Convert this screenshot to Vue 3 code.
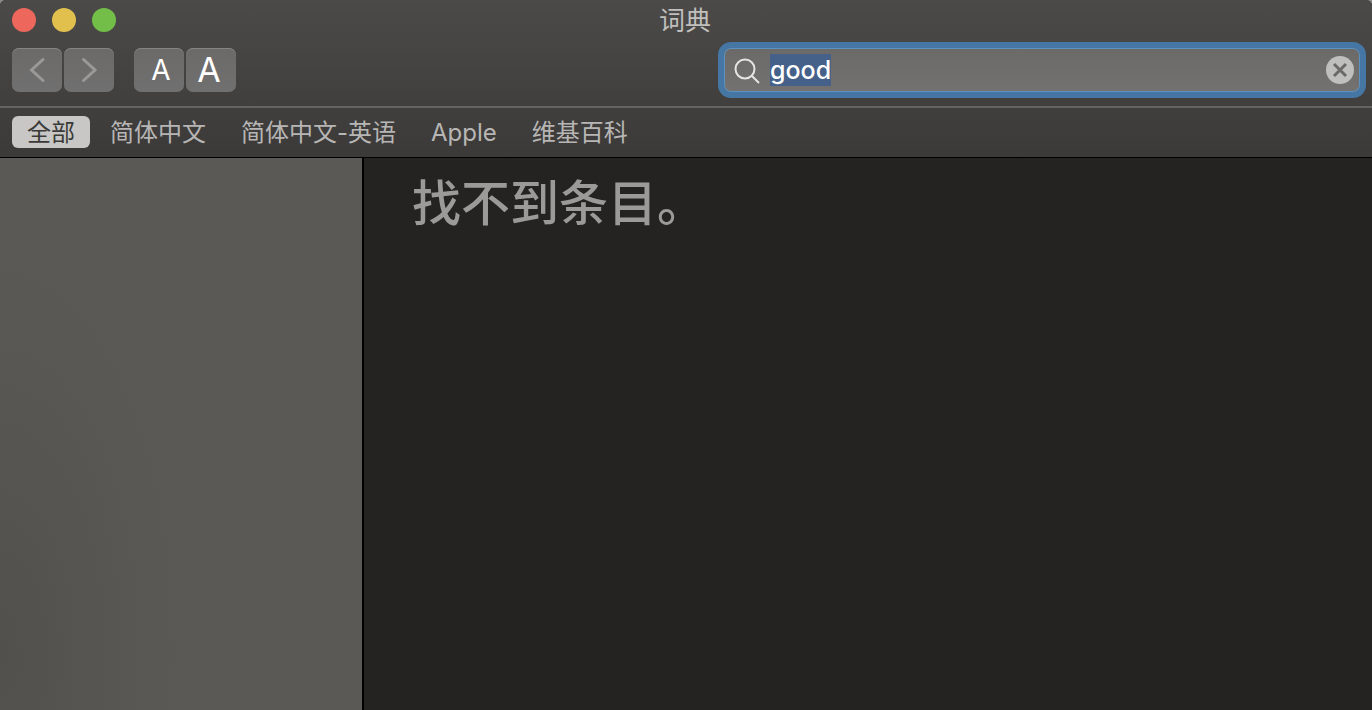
<script setup>
import { onMounted, ref } from 'vue'

const sources = ['全部', '简体中文', '简体中文-英语', 'Apple', '维基百科']
const active = ref('全部')
const query = ref('good')
const field = ref(null)

onMounted(() => {
  field.value.focus()
  field.value.select()
})

function clearQuery() {
  query.value = ''
  field.value.focus()
}
</script>

<template>
  <div class="window">
    <header class="chrome">
      <div class="titlebar">
        <div class="lights">
          <button class="light close" type="button" aria-label="关闭"></button>
          <button class="light minimize" type="button" aria-label="最小化"></button>
          <button class="light zoom" type="button" aria-label="缩放"></button>
        </div>
        <h1 class="title">词典</h1>
      </div>
      <div class="toolbar">
        <div class="group">
          <button class="tool" type="button" aria-label="后退" disabled>
            <svg width="50" height="44" viewBox="0 0 50 44"><path d="M31 11.500L19.500 22L31 32.500" /></svg>
          </button>
          <button class="tool" type="button" aria-label="前进" disabled>
            <svg width="50" height="44" viewBox="0 0 50 44"><path d="M19.500 11.500L31 22L19.500 32.500" /></svg>
          </button>
        </div>
        <div class="group">
          <button class="tool small" type="button" aria-label="缩小文字">A</button>
          <button class="tool large" type="button" aria-label="放大文字">A</button>
        </div>
        <div class="search">
          <svg class="lens" width="28" height="28" viewBox="0 0 28 28">
            <circle cx="12" cy="13" r="9.500" />
            <path d="M19 20L26 27" />
          </svg>
          <input ref="field" v-model="query" type="text" aria-label="搜索" spellcheck="false" />
          <button class="clear" type="button" aria-label="清除" @click="clearQuery">
            <svg width="28" height="28" viewBox="0 0 28 28"><path d="M8 8L20 20M20 8L8 20" /></svg>
          </button>
        </div>
      </div>
      <nav class="sources">
        <button
          v-for="source in sources"
          :key="source"
          type="button"
          class="source"
          :class="{ active: source === active }"
          @click="active = source"
        >{{ source }}</button>
      </nav>
    </header>
    <div class="body">
      <aside class="sidebar"></aside>
      <main class="entry">
        <p class="message">找不到条目。</p>
      </main>
    </div>
  </div>
</template>

<style>
body {
  margin: 0;
  background: #8a8a88;
}
</style>

<style scoped>
.window {
  display: flex;
  flex-direction: column;
  min-height: 100vh;
  overflow: hidden;
  border-radius: 6px 6px 0 0;
  background: #242321;
  font-family: Inter, "Noto Sans CJK SC", sans-serif;
}

button,
input {
  margin: 0;
  padding: 0;
  border: 0;
  font: inherit;
}

.chrome {
  background: linear-gradient(#4b4a48, #3b3a38);
  border-bottom: 1px solid #000;
}

.titlebar {
  display: grid;
  grid-template-columns: 1fr auto 1fr;
  align-items: center;
  height: 40px;
  padding: 0 14px 0 12px;
}

.lights {
  display: flex;
  gap: 16px;
}

.light {
  width: 24px;
  height: 24px;
  border-radius: 50%;
}

.close { background: #ee675c; }
.minimize { background: #e1c04e; }
.zoom { background: #73be48; }

.title {
  margin: 0;
  padding-top: 2px;
  color: #c0bfbd;
  font-size: 26px;
  font-weight: 400;
  line-height: 38px;
}

.toolbar {
  display: flex;
  gap: 20px;
  padding: 8px 12px 14px;
  border-bottom: 2px solid #646361;
}

.group {
  display: flex;
  gap: 2px;
}

.tool {
  display: grid;
  place-items: center;
  width: 50px;
  height: 44px;
  border-radius: 7px;
  background: linear-gradient(#6b6a69, #717070);
  box-shadow: inset 0 1px #858483;
  color: #fff;
}

.tool svg {
  fill: none;
  stroke: #9a9998;
  stroke-width: 3;
  stroke-linecap: round;
}

.small { font-size: 28px; padding-left: 4px; }
.large { font-size: 34px; padding-right: 4px; }
.small,
.large {
  font-family: Inter, sans-serif;
  line-height: 44px;
}

.search {
  display: flex;
  align-items: center;
  flex: 0 1 636px;
  box-sizing: border-box;
  height: 44px;
  margin-left: auto;
  padding: 0 6px 0 9px;
  border-radius: 7px;
  background: linear-gradient(#6b6a68, #737270);
  box-shadow: inset 0 0 0 1px #5b92c2, 0 0 0 6px #4676a3;
}

.lens {
  flex: none;
  fill: none;
  stroke: #e6e5e4;
  stroke-width: 2;
}

.search input {
  flex: 1;
  min-width: 0;
  height: 32px;
  margin-left: 9px;
  outline: 0;
  background: none;
  color: #fff;
  font-family: Inter, sans-serif;
  font-size: 25px;
  font-weight: 500;
  line-height: 32px;
}

.search input::selection {
  background: #466189;
  color: #fff;
}

.clear {
  display: grid;
  flex: none;
  width: 28px;
  height: 28px;
  border-radius: 50%;
  background: #bfbfbe;
}

.clear svg {
  fill: none;
  stroke: #6b6a69;
  stroke-width: 3;
}

.sources {
  display: flex;
  gap: 5px;
  padding: 8px 12px 9px;
}

.source {
  height: 32px;
  padding: 2px 15px 0;
  border-radius: 6px;
  background: none;
  color: #b7b6b5;
  font-size: 24px;
  line-height: 30px;
  white-space: nowrap;
}

.active {
  background: #c8c7c6;
  color: #3b3a38;
}

.body {
  display: flex;
  flex: 1;
}

.sidebar {
  flex: 0 0 362px;
  border-right: 2px solid #000;
  background: radial-gradient(ellipse 180px 400px at 0 90%, #51504d, #565552 50%, #5a5956);
}

.entry {
  flex: 1;
  padding: 10px 48px;
}

.message {
  margin: 0;
  color: #9b9a98;
  font-size: 49px;
  font-weight: 500;
  line-height: 72px;
}
</style>
